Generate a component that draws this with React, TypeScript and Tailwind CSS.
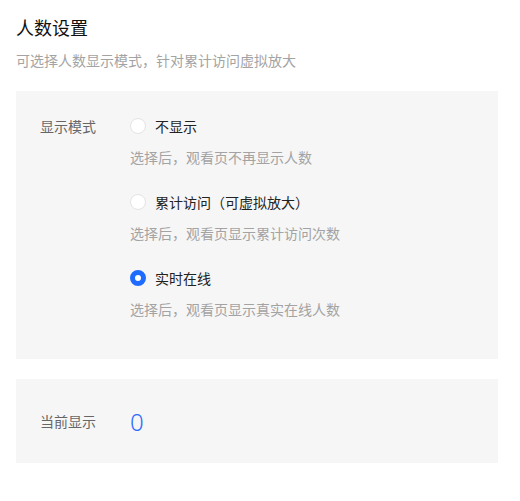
import React from "react";

const font = { fontFamily: '"Noto Sans CJK SC", "Noto Sans", sans-serif' };

function Radio({ checked }: { checked?: boolean }) {
  return checked ? (
    <span className="box-border w-[16px] h-[16px] rounded-full border-[5px] border-[#1e6bff] bg-white shrink-0" />
  ) : (
    <span className="box-border w-[16px] h-[16px] rounded-full border border-[#e3e3e3] bg-white shrink-0" />
  );
}

const options = [
  { label: "不显示", desc: "选择后，观看页不再显示人数", checked: false },
  { label: "累计访问（可虚拟放大）", desc: "选择后，观看页显示累计访问次数", checked: false },
  { label: "实时在线", desc: "选择后，观看页显示真实在线人数", checked: true },
];

export default function App() {
  return (
    <div className="w-[520px] h-[501px] bg-white px-[16px] pt-[14px]" style={font}>
      <div className="text-[18px] leading-[26px] text-[#111]">人数设置</div>
      <div className="mt-[10px] text-[14px] leading-[20px] text-[#a3a3a3]">
        可选择人数显示模式，针对累计访问虚拟放大
      </div>
      <div className="mt-[21px] w-[482px] bg-[#f6f6f6] pl-[24px] pt-[24px] pb-[39px] flex">
        <div className="w-[90px] h-[22px] leading-[22px] text-[14px] text-[#666]">显示模式</div>
        <div className="flex flex-col gap-[23px]">
          {options.map((o) => (
            <div key={o.label} className="flex flex-col">
              <div className="h-[22px] flex items-center gap-[9px]">
                <Radio checked={o.checked} />
                <span className="text-[14px] text-[#222]">{o.label}</span>
              </div>
              <div className="mt-[9px] h-[22px] leading-[22px] text-[14px] text-[#a3a3a3]">{o.desc}</div>
            </div>
          ))}
        </div>
      </div>
      <div className="mt-[20px] w-[482px] h-[84px] bg-[#f6f6f6] pl-[24px] flex items-center">
        <div className="w-[90px] text-[14px] text-[#666]">当前显示</div>
        <div className="text-[24px] leading-[26px] font-light text-[#2f6cff] pt-[2px]" style={{ fontFamily: '"Noto Sans", sans-serif' }}>0</div>
      </div>
    </div>
  );
}
